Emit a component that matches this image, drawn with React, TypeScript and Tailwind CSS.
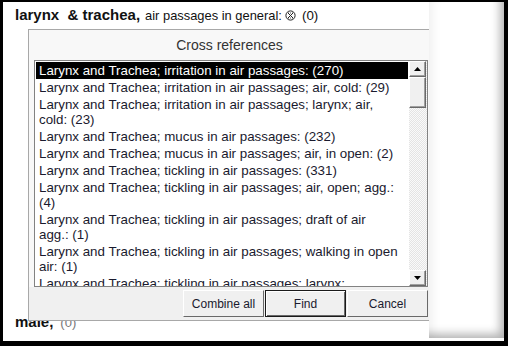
import React from "react";

type Item = { lines: string[]; selected?: boolean };

// Line breaks are given as they wrap in the list box
const items: Item[] = [
  { lines: ["Larynx and Trachea; irritation in air passages: (270)"], selected: true },
  { lines: ["Larynx and Trachea; irritation in air passages; air, cold: (29)"] },
  { lines: ["Larynx and Trachea; irritation in air passages; larynx; air,", "cold: (23)"] },
  { lines: ["Larynx and Trachea; mucus in air passages: (232)"] },
  { lines: ["Larynx and Trachea; mucus in air passages; air, in open: (2)"] },
  { lines: ["Larynx and Trachea; tickling in air passages: (331)"] },
  { lines: ["Larynx and Trachea; tickling in air passages; air, open; agg.:", "(4)"] },
  { lines: ["Larynx and Trachea; tickling in air passages; draft of air", "agg.: (1)"] },
  { lines: ["Larynx and Trachea; tickling in air passages; walking in open", "air: (1)"] },
  { lines: ["Larynx and Trachea; tickling in air passages; larynx:", "mucus: (1)"] },
];

function NoneIcon(): React.JSX.Element {
  return (
    <svg width="11" height="11" viewBox="0 0 11 11" className="ml-[3px] mr-[6px] self-center">
      <circle cx="5.5" cy="5.5" r="4.6" fill="none" stroke="#222" strokeWidth="1" />
      <path d="M3 3 L8 8 M8 3 L3 8" stroke="#222" strokeWidth="1" />
      <path d="M3 3 H8 M3 8 H8" stroke="#222" strokeWidth="0.8" strokeDasharray="1 1" />
    </svg>
  );
}

function ScrollButton({ down }: { down?: boolean }): React.JSX.Element {
  return (
    <div className="h-[16px] w-[17px] bg-[#f0f0f0] border-t border-l border-t-white border-l-white border-b border-r border-b-[#696969] border-r-[#696969] flex items-center justify-center shadow-[inset_-1px_-1px_0_#a0a0a0]">
      <svg width="7" height="4" viewBox="0 0 7 4">
        {down ? <path d="M0 0 H7 L3.5 4 Z" fill="#000" /> : <path d="M0 4 H7 L3.5 0 Z" fill="#000" />}
      </svg>
    </div>
  );
}

function DialogButton({ label, primary }: { label: string; primary?: boolean }): React.JSX.Element {
  return (
    <button
      className={
        primary
          ? "h-[27px] w-[81px] bg-[#f0f0f0] border border-[#1a1a1a] shadow-[inset_1px_1px_0_#fff,inset_-1px_-1px_0_#696969] text-[12px] text-[#1a1a2e]"
          : "h-[27px] w-[81px] bg-[#f0f0f0] border-t border-l border-t-white border-l-white border-b border-r border-b-[#696969] border-r-[#696969] text-[12px] text-[#1a1a2e]"
      }
    >
      {label}
    </button>
  );
}

export default function App(): React.JSX.Element {
  return (
    <div
      className="w-[508px] h-[346px] bg-black pt-[2px] pl-[3px] pr-[4px] pb-[5px]"
      style={{ fontFamily: '"Liberation Sans", Arial, sans-serif' }}
    >
      <div className="relative h-full bg-white overflow-hidden">
        {/* Page content behind the dialog */}
        <div className="pl-[12px] pt-[2px] flex flex-col h-full">
          <div className="flex items-baseline text-[#111]">
            <span className="font-bold text-[15px] whitespace-pre">larynx  &amp; trachea,</span>
            <span className="ml-[5px] text-[12.9px]">air passages in general:</span>
            <NoneIcon />
            <span className="text-[13.33px]">(0)</span>
          </div>
          <div className="flex-1" />
          <div className="flex items-baseline mb-[8px]">
            <span className="font-bold text-[15px] text-[#111]">male,</span>
            <span className="ml-[7px] text-[13px] text-[#777]">(0)</span>
          </div>
        </div>

        {/* Cross references dialog */}
        <div className="absolute left-[25px] top-[27px] w-[403px] h-[292px] bg-[#f8f8f8] border border-[#a8a8a8] flex flex-col">
          <div className="h-[30px] flex items-center justify-center text-[14px] text-[#333]">Cross references</div>
          <div className="ml-[5px] mr-[2px] h-[227px] bg-white border border-[#828282] flex">
            <div className="flex-1 p-px overflow-hidden">
              {items.map((item, i) => (
                <div
                  key={i}
                  className={
                    item.selected
                      ? "bg-black text-white px-[3px] py-px text-[13.33px] leading-[15px] whitespace-nowrap"
                      : "text-[#1a1a2e] px-[3px] py-px text-[13.33px] leading-[15px] whitespace-nowrap"
                  }
                >
                  {item.lines.map((line, j) => (
                    <div key={j}>{line}</div>
                  ))}
                </div>
              ))}
            </div>
            <div className="w-[18px] flex flex-col bg-[repeating-conic-gradient(#e4e4e4_0_25%,#fafafa_0_50%)] bg-[length:2px_2px]">
              <ScrollButton />
              <div className="h-[31px] w-[17px] bg-[#f0f0f0] border-t border-l border-t-white border-l-white border-b border-r border-b-[#696969] border-r-[#696969] shadow-[inset_-1px_-1px_0_#a0a0a0]" />
              <div className="flex-1" />
              <ScrollButton down />
            </div>
          </div>
          <div className="flex-1 bg-[#f0f0f0] flex justify-end items-start pt-[3px] pr-[2px]">
            <DialogButton label="Combine all" />
            <div className="ml-px">
              <DialogButton label="Find" primary />
            </div>
            <div className="ml-px">
              <DialogButton label="Cancel" />
            </div>
          </div>
        </div>

        {/* Window on the right, partly shaded */}
        <div className="absolute left-[426px] top-0 w-[75px] h-[336px] bg-white shadow-[inset_-9px_-9px_10px_-5px_rgba(0,0,0,0.3),inset_10px_0_12px_-8px_rgba(0,0,0,0.08)]" />
      </div>
    </div>
  );
}
